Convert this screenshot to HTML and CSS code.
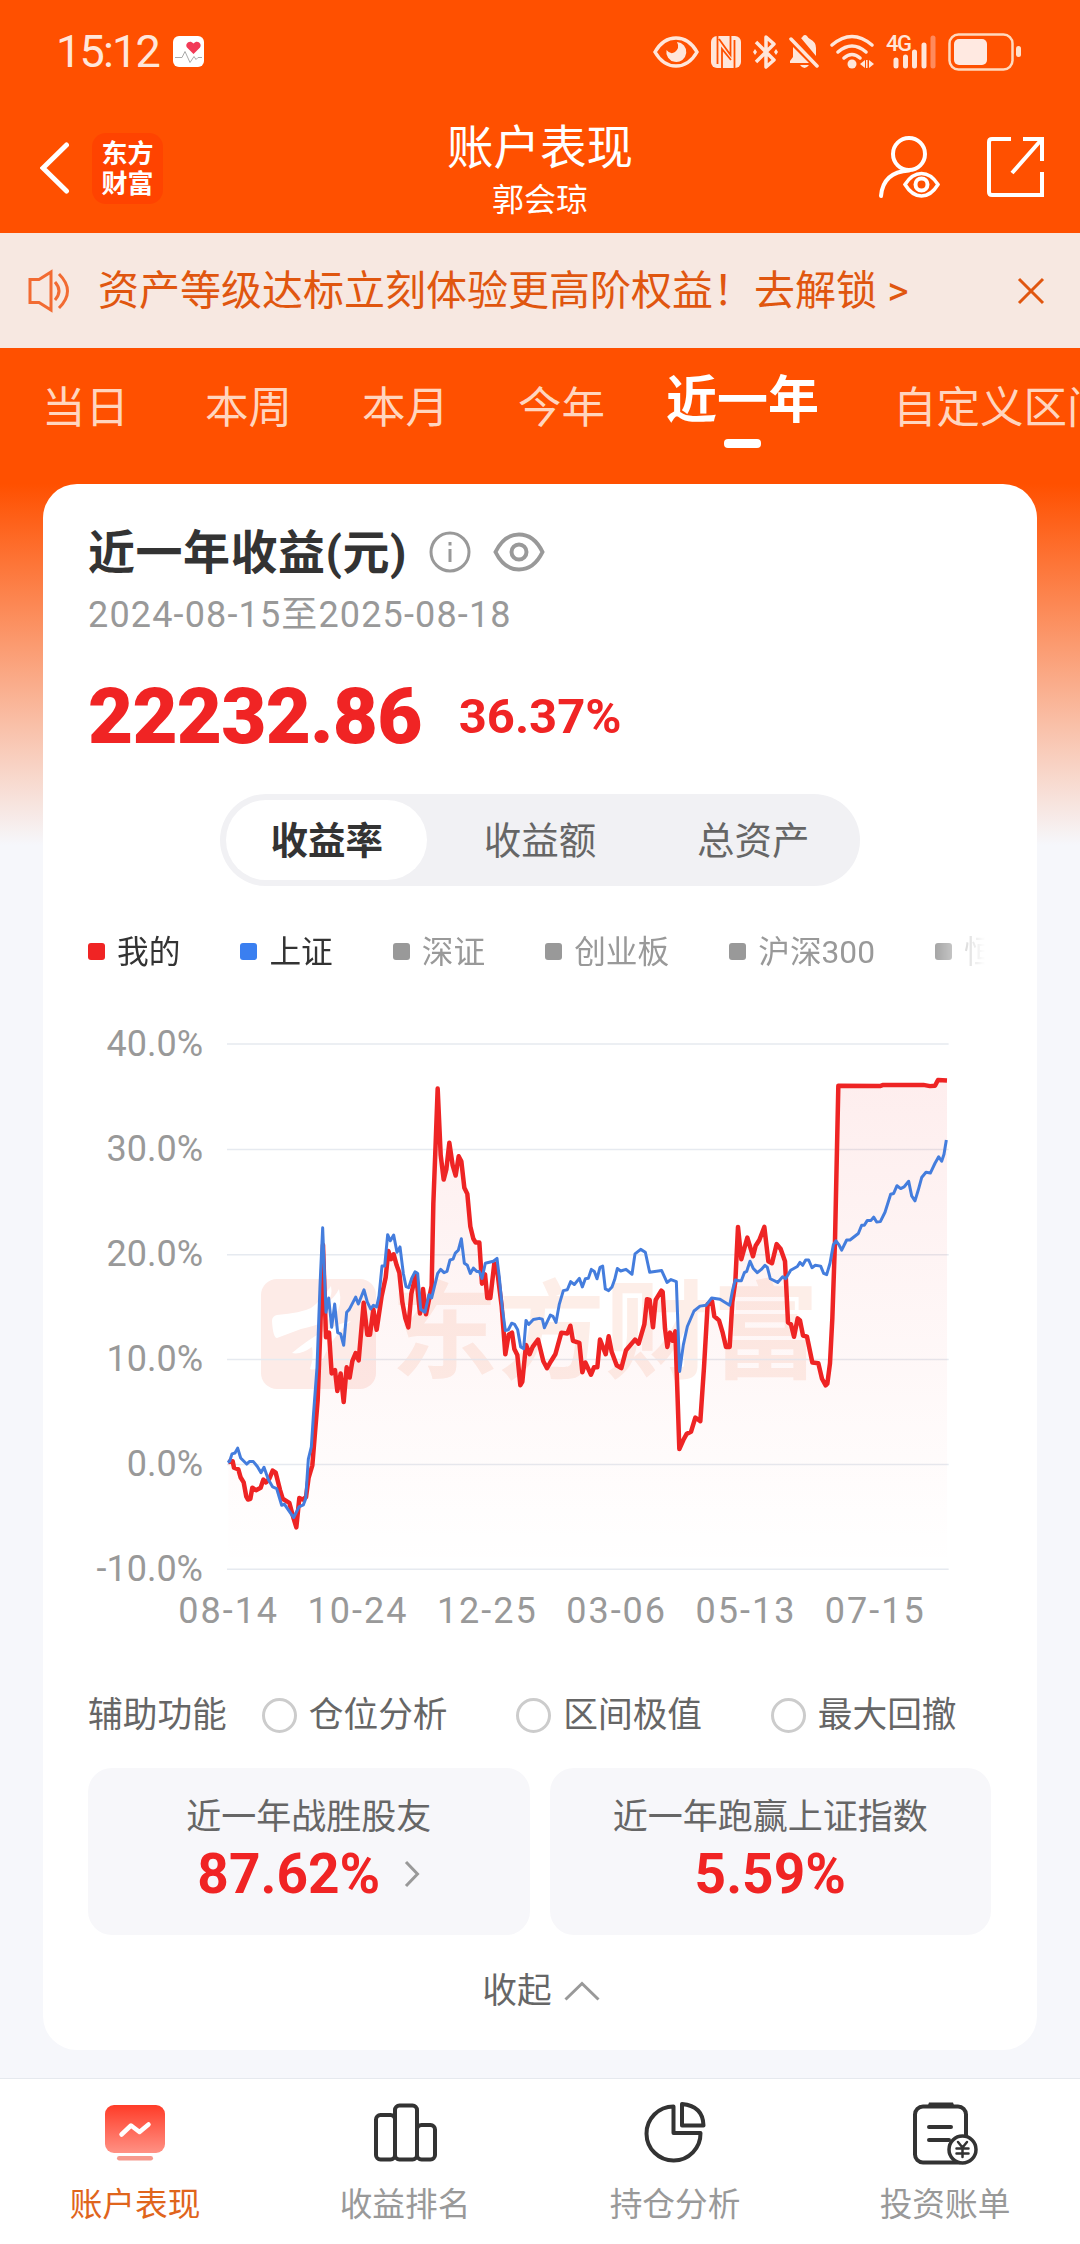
FILE: index.html
```html
<!DOCTYPE html>
<html lang="zh-CN">
<head>
    <meta charset="UTF-8">
    <meta name="viewport" content="width=device-width, initial-scale=1.0">
    <title>账户表现</title>
    <link rel="stylesheet" href="styles.css">
</head>
<body>
    <div class="status-bar">
        <span class="time">15:12</span>
        <svg class="health" width="31" height="31" viewBox="0 0 31 31">
            <rect width="31" height="31" rx="6" fill="#fff"/>
            <path d="M20.500 18 L14 11.500 C11.500 8 16.500 3 20.500 7.500 C24.500 3 29.500 8 27 11.500 Z" fill="#f23a57"/>
            <path d="M2 21.500 h7 l3 -6 5 11 4 -6 2 3 2 -2 h4" fill="none" stroke="#aaa" stroke-width="1"/>
        </svg>
        <div class="status-icons">
            <svg width="46" height="36" viewBox="0 0 46 36">
                <path d="M2 18 Q10 4 23 4 T44 18 Q36 32 23 32 T2 18 Z" fill="none" stroke="#ffe6da" stroke-width="3.500"/>
                <path d="M24 8 a10 10 0 1 1 -10.500 8 q4 5 8.500 2 q5 -4 2 -10 Z" fill="#ffe6da"/>
            </svg>
            <svg width="32" height="36" viewBox="0 0 32 36">
                <rect x="1" y="2" width="30" height="32" rx="6" fill="#ffe6da"/>
                <path d="M7.500 2 V30 M24.500 6 V34 M12 34 V15 L21 26 M20.500 2 V21 L9 5" fill="none" stroke="#ff5000" stroke-width="1.800"/>
            </svg>
            <svg width="25" height="36" viewBox="0 0 25 36">
                <path d="M3 8 L21 26 L13 33 V3 L21 10 L3 28" fill="none" stroke="#ffe6da" stroke-width="3.500" stroke-linejoin="round"/>
                <path d="M0 18 l2 -3 2 3 -2 3 Z M21 18 l2 -3 2 3 -2 3 Z" fill="#ffe6da"/>
            </svg>
            <svg width="30" height="36" viewBox="0 0 30 36">
                <path d="M4 13 L20 29 H1 V27 L4 23 Z M12 4 Q13 4 14 2 Q16 0 18 2 Q19 4 21 5 Q27 8 27 14 V22 Z M11 31 h9 q-4.500 6 -9 0 Z" fill="#ffe6da"/>
                <path d="M2 5 L28 32" stroke="#ffe6da" stroke-width="3.500" stroke-linecap="round"/>
            </svg>
            <svg width="45" height="36" viewBox="0 0 45 36">
                <path d="M2 11 Q22 -6 42 11 M8 18 Q22 6 36 18 M14 24 Q22 17 30 24" fill="none" stroke="#ffe6da" stroke-width="3.500" stroke-linecap="round"/>
                <circle cx="22" cy="30" r="4.500" fill="#ffe6da"/>
                <path d="M30 30 l5 -4 v8 Z M36 26 h1.500 v8 h-1.500 Z M39 26 l5 4 -5 4 Z" fill="#ffe6da"/>
            </svg>
            <svg width="51" height="36" viewBox="0 0 51 36">
                <path d="M10 26 V32 M19.500 23 V32 M28.500 18 V32 M38 11 V32" stroke="#ffe6da" stroke-width="5" stroke-linecap="round"/>
                <path d="M47 4 V32" stroke="#ff8a5c" stroke-width="5" stroke-linecap="round"/>
                <text x="0" y="17" class="net">4G</text>
            </svg>
            <svg width="73" height="38" viewBox="0 0 73 38">
                <rect x="1.500" y="1.500" width="63" height="35" rx="9" fill="none" stroke="#ffd9bd" stroke-width="2.500"/>
                <rect x="6" y="6" width="33" height="26" rx="5" fill="#ffe9e1"/>
                <rect x="68" y="13" width="5" height="11" rx="2.500" fill="#ffe1cc"/>
            </svg>
        </div>
    </div>

    <header class="header">
        <div class="header-left">
            <svg width="30" height="52" viewBox="0 0 30 52">
                <path d="M26.500 3 L3 26 L26.500 49" fill="none" stroke="#fff" stroke-width="5" stroke-linecap="round"/>
            </svg>
            <div class="brand">东方<br>财富</div>
        </div>
        <div class="header-title">
            <h1>账户表现</h1>
            <p>郭会琼</p>
        </div>
        <div class="header-right">
            <svg width="62" height="64" viewBox="0 0 62 64" fill="none" stroke="#fff" stroke-width="4">
                <circle cx="31" cy="19" r="16"/>
                <path d="M3 61 Q5 37 31 35.500" stroke-linecap="round"/>
                <path d="M27 49.500 Q34 38.500 43.500 38.500 T60 49.500 Q53 61 43.500 61 T27 49.500 Z" stroke-width="3.500"/>
                <circle cx="43.500" cy="49.500" r="6"/>
            </svg>
            <svg width="58" height="60" viewBox="0 0 58 60" fill="none" stroke="#fff" stroke-width="4">
                <path d="M24 2 H5 Q2 2 2 5 V55 Q2 58 5 58 H55 V35"/>
                <path d="M36 2 H55 V24 M55 2 L25 36"/>
            </svg>
        </div>
    </header>

    <div class="notice">
        <svg width="42" height="44" viewBox="0 0 42 44" fill="none" stroke="#f26b32" stroke-width="3">
            <path d="M2 10.500 H11 L23 3 V41 L11 33.500 H2 Z"/>
            <path d="M27 13 Q35 22 27 31 M31 5 Q48 22 31 39"/>
        </svg>
        <p>资产等级达标立刻体验更高阶权益！去解锁 &gt;</p>
        <svg width="28" height="28" viewBox="0 0 28 28">
            <path d="M2 2 L26 26 M26 2 L2 26" stroke="#e0560f" stroke-width="3"/>
        </svg>
    </div>

    <nav class="tabs">
        <a>当日</a>
        <a>本周</a>
        <a>本月</a>
        <a>今年</a>
        <a class="active">近一年</a>
        <a>自定义区间</a>
    </nav>

    <main class="card">
        <div class="title-row">
            <h2>近一年收益(元)</h2>
            <svg width="42" height="42" viewBox="0 0 42 42" fill="none" stroke="#999" stroke-width="3">
                <circle cx="21" cy="21" r="19"/>
                <path d="M21 18 V31 M21 11 V14.500"/>
            </svg>
            <svg width="52" height="40" viewBox="0 0 52 40" fill="none" stroke="#999" stroke-width="4">
                <path d="M2.500 20 Q11 2.500 26 2.500 T49.500 20 Q41 37.500 26 37.500 T2.500 20 Z"/>
                <circle cx="26" cy="20" r="7.500"/>
            </svg>
        </div>
        <p class="period">2024-08-15至2025-08-18</p>
        <div class="amount">
            <strong>22232.86</strong>
            <span>36.37%</span>
        </div>

        <div class="segment">
            <span class="on">收益率</span>
            <span>收益额</span>
            <span>总资产</span>
        </div>

        <div class="legend">
            <span class="mine">我的</span>
            <span class="sh">上证</span>
            <span>深证</span>
            <span>创业板</span>
            <span>沪深300</span>
            <span>恒生</span>
        </div>

        <div class="chart">
            <div class="y-axis">
                <span>40.0%</span>
                <span>30.0%</span>
                <span>20.0%</span>
                <span>10.0%</span>
                <span>0.0%</span>
                <span>-10.0%</span>
            </div>
            <div class="plot">
                <div class="watermark">
                    <svg width="115" height="110" viewBox="0 0 115 110">
                        <rect width="115" height="110" rx="16" fill="#fdebe7"/>
                        <path d="M11 42 Q11 37 16 36 Q40 34 50 29 Q60 22 70 7 Q72 17 66 24 Q74 18 78 10 Q82 26 74 36 Q66 44 40 50 L16 59 Q12 59 11 42 Z M31 74 Q62 48 90 42 Q68 60 60 86 Q55 92 49 90 Q53 78 51 68 Q40 76 31 74 Z" fill="#fff"/>
                    </svg>
                    <span>东方财富</span>
                </div>
                <svg class="lines" viewBox="441 63.700 2169 1374.500" preserveAspectRatio="none">
                    <defs>
                        <linearGradient id="area" x1="0" y1="0" x2="0" y2="1">
                            <stop offset="0" stop-color="#f02828" stop-opacity="0.080"/>
                            <stop offset="1" stop-color="#f02828" stop-opacity="0"/>
                        </linearGradient>
                    </defs>
                    <path class="grid" d="M441 108 H2606 M441 366 H2606 M441 624 H2606 M441 881 H2606 M441 1138 H2606 M441 1395 H2606"/>
                    <path fill="url(#area)" d="M445 1132 458 1130 475 1150 504 1224 517 1195 542 1195 578 1153 608 1222 628 1232 649 1292 658 1220 678 1218 697 1140 713 980 729 600 738 826 747 815 755 915 765 907 772 958 782 915 791 985 800 900 809 925 827 865 836 883 851 742 862 820 870 820 880 758 890 808 905 725 917 680 925 615 941 623 958 668 967 740 985 802 994 720 1008 670 1020 768 1029 708 1038 770 1055 700 1060 500 1073 217 1082 380 1091 440 1108 350 1127 430 1136 383 1144 395 1153 460 1162 475 1171 555 1187 594 1198 594 1206 695 1215 672 1222 730 1231 730 1243 645 1252 665 1265 750 1276 868 1286 820 1296 815 1303 855 1312 870 1321 944 1338 845 1349 868 1374 832 1401 902 1426 868 1444 815 1462 817 1471 798 1479 835 1498 840 1507 912 1516 888 1533 918 1552 900 1560 832 1577 868 1586 824 1595 862 1624 902 1638 858 1676 842 1693 795 1701 733 1709 735 1719 802 1727 735 1748 715 1762 850 1770 815 1778 835 1786 812 1798 1100 1820 1063 1833 1058 1846 1023 1861 1032 1883 745 1896 738 1903 775 1917 785 1938 850 1949 850 1957 740 1966 690 1974 556 1984 635 2002 582 2019 628 2027 602 2053 556 2065 640 2076 645 2090 598 2115 640 2124 790 2133 795 2142 825 2153 780 2169 822 2181 825 2197 888 2215 890 2237 944 2250 890 2257 780 2265 590 2275 210 2565 210 2574 196 2601 197 V1395 H445 Z"/>
                    <path class="line-mine" d="M445 1132 458 1130 462 1146 475 1150 482 1170 491 1182 499 1217 504 1224 511 1222 517 1195 528 1201 542 1195 550 1175 558 1182 568 1173 578 1153 587 1158 600 1200 608 1222 628 1232 640 1268 649 1292 658 1220 668 1224 678 1218 686 1170 697 1140 705 1060 713 980 720 830 729 600 738 826 747 815 755 915 765 907 772 958 782 915 791 985 800 900 809 925 817 885 827 865 836 883 851 742 862 820 870 820 880 758 890 808 905 725 917 680 925 615 933 635 941 623 950 650 958 668 967 740 976 780 985 802 994 720 1008 670 1020 768 1029 708 1038 770 1048 730 1055 700 1060 500 1067 350 1073 217 1082 380 1091 440 1099 415 1108 350 1118 405 1127 430 1136 383 1144 395 1153 460 1162 475 1171 555 1180 585 1187 594 1198 594 1206 695 1215 672 1222 730 1231 730 1243 645 1252 665 1265 750 1276 868 1286 820 1296 815 1303 855 1312 870 1321 944 1327 935 1338 845 1349 868 1358 850 1374 832 1390 885 1401 902 1413 885 1426 868 1444 815 1462 817 1471 798 1479 835 1498 840 1507 912 1516 888 1533 918 1542 900 1552 900 1560 832 1577 868 1586 824 1595 862 1610 895 1624 902 1638 858 1665 832 1676 842 1693 795 1701 733 1709 735 1719 802 1727 735 1744 712 1748 715 1755 805 1762 850 1770 815 1778 835 1786 812 1798 1100 1810 1078 1820 1063 1833 1058 1846 1023 1861 1032 1872 900 1883 745 1896 738 1903 775 1917 785 1928 815 1938 850 1949 850 1957 740 1966 690 1974 556 1984 635 2002 582 2019 628 2027 602 2038 588 2053 556 2065 640 2076 645 2090 598 2102 610 2115 640 2124 790 2133 795 2142 825 2153 780 2160 785 2169 822 2181 825 2197 888 2215 890 2226 928 2237 944 2242 940 2250 890 2257 780 2265 590 2275 210 2400 211 2410 208 2530 208 2550 211 2565 210 2574 196 2601 197"/>
                    <path class="line-sh" d="M443 1133 449 1130 456 1112 465 1110 473 1098 482 1122 500 1137 508 1131 520 1131 532 1143 543 1158 552 1145 565 1175 578 1193 590 1197 605 1238 613 1235 628 1253 641 1268 657 1242 670 1237 677 1222 685 1125 694 1095 700 1020 711 900 720 700 728 558 738 765 746 730 755 802 764 745 773 815 782 818 791 846 800 765 808 758 827 728 835 745 852 710 862 740 872 757 880 748 890 752 897 725 906 652 914 652 923 575 931 590 941 576 951 618 960 605 970 670 978 702 986 705 995 682 1005 666 1013 670 1022 758 1035 765 1047 722 1055 730 1073 670 1082 660 1092 668 1101 665 1110 637 1119 635 1126 620 1135 613 1144 585 1153 645 1162 650 1171 670 1180 657 1190 665 1198 665 1206 682 1216 645 1240 640 1251 633 1258 680 1267 755 1276 810 1285 808 1295 792 1304 795 1313 808 1322 850 1331 854 1338 785 1346 795 1360 783 1378 780 1387 782 1393 803 1411 772 1419 775 1428 790 1438 745 1450 712 1462 710 1472 690 1483 697 1498 682 1507 703 1516 683 1525 682 1534 660 1543 665 1551 683 1560 655 1568 652 1576 708 1586 712 1596 703 1604 685 1612 658 1622 664 1638 660 1656 672 1665 622 1682 611 1696 618 1709 667 1745 663 1761 692 1773 685 1789 690 1794 800 1799 910 1810 845 1822 800 1842 762 1860 750 1878 748 1895 730 1920 733 1949 748 1958 710 1966 686 1976 688 1984 688 1993 668 2000 665 2010 640 2020 658 2032 668 2044 660 2055 650 2062 655 2071 683 2093 692 2108 678 2117 683 2132 662 2152 653 2160 643 2168 650 2177 637 2186 637 2196 656 2206 650 2222 652 2231 670 2240 673 2250 645 2260 600 2268 590 2277 600 2285 613 2300 588 2310 588 2335 572 2345 552 2353 552 2362 540 2373 540 2381 532 2390 544 2401 543 2415 520 2432 476 2441 474 2451 455 2462 462 2472 458 2486 444 2495 480 2505 492 2515 465 2525 435 2538 422 2551 424 2565 400 2576 384 2585 395 2592 378 2599 343"/>
                </svg>
            </div>
            <div class="x-axis">
                <span>08-14</span>
                <span>10-24</span>
                <span>12-25</span>
                <span>03-06</span>
                <span>05-13</span>
                <span>07-15</span>
            </div>
        </div>

        <div class="tools">
            <span class="label">辅助功能</span>
            <label><i></i>仓位分析</label>
            <label><i></i>区间极值</label>
            <label><i></i>最大回撤</label>
        </div>

        <div class="stats">
            <div class="stat">
                <p>近一年战胜股友</p>
                <div class="value">
                    87.62%
                    <svg width="16" height="28" viewBox="0 0 16 28"><path d="M2 2 L13.500 14 L2 26" fill="none" stroke="#999" stroke-width="3"/></svg>
                </div>
            </div>
            <div class="stat">
                <p>近一年跑赢上证指数</p>
                <div class="value">5.59%</div>
            </div>
        </div>

        <div class="collapse">
            收起
            <svg width="36" height="20" viewBox="0 0 36 20"><path d="M1.500 18.500 L18 2.500 L34.500 18.500" fill="none" stroke="#999" stroke-width="3"/></svg>
        </div>
    </main>

    <footer class="bottom-nav">
        <a class="current">
            <svg width="66" height="64" viewBox="0 0 66 64">
                <defs>
                    <linearGradient id="screen" x1="0" y1="0" x2="0" y2="1">
                        <stop offset="0" stop-color="#ff3c28"/>
                        <stop offset="1" stop-color="#ff9184"/>
                    </linearGradient>
                </defs>
                <rect x="3" y="4" width="60" height="48" rx="9" fill="url(#screen)"/>
                <path d="M19.500 33.500 L29 24.500 L37.500 31 L46.500 23.500" fill="none" stroke="#fff" stroke-width="4.500" stroke-linecap="round" stroke-linejoin="round"/>
                <rect x="15" y="55" width="36" height="4.500" rx="2.200" fill="#f69a8e"/>
            </svg>
            账户表现
        </a>
        <a>
            <svg width="66" height="64" viewBox="0 0 66 64" fill="none" stroke="#333" stroke-width="4">
                <rect x="4" y="14" width="19" height="44.500" rx="4.500"/>
                <rect x="23" y="4.500" width="22" height="54" rx="4.500"/>
                <rect x="45" y="24" width="18" height="34.500" rx="4.500"/>
            </svg>
            收益排名
        </a>
        <a>
            <svg width="66" height="64" viewBox="0 0 66 64" fill="none" stroke="#333" stroke-width="4" stroke-linejoin="round">
                <path d="M31.500 5.500 V32 H58.500 A27 27 0 1 1 31.500 5.500 Z"/>
                <path d="M40 3 V24.500 H61.500 Q61 5 40 3 Z"/>
            </svg>
            持仓分析
        </a>
        <a>
            <svg width="66" height="64" viewBox="0 0 66 64" fill="none" stroke="#333" stroke-width="4" stroke-linecap="round">
                <rect x="3" y="5.500" width="51" height="56" rx="8"/>
                <path d="M17 1.500 H41 L43 7 H15 Z" fill="#333" stroke="none"/>
                <path d="M17 26 H39 M17 39 H37"/>
                <circle cx="50.500" cy="48.500" r="13.500" fill="#fff" stroke-width="3.500"/>
                <path d="M46 41 L50.500 46.500 L55 41 M50.500 46.500 V56 M44.500 47.500 H56.500 M44.500 52.500 H56.500" stroke-width="2.500"/>
            </svg>
            投资账单
        </a>
    </footer>
</body>
</html>
```
FILE: styles.css
```css
* {
    box-sizing: border-box;
}

body {
    margin: 0;
    width: 1080px;
    height: 2244px;
    overflow: hidden;
    font-family: Roboto, "Noto Sans CJK SC", sans-serif;
    color: #333;
    background: linear-gradient(#ff5000 484px, #f6f7fb 845px);
}

h1, h2, p {
    margin: 0;
    font-weight: normal;
}

svg {
    display: block;
    flex-shrink: 0;
}

.status-bar {
    display: flex;
    align-items: center;
    height: 103px;
    padding: 0 59px 0 56px;
    color: #ffe6da;
}

.time {
    width: 117px;
    font-size: 45px;
    letter-spacing: -1.800px;
}

.status-icons {
    display: flex;
    align-items: center;
    gap: 11px;
    margin-left: auto;
}

.net {
    font-size: 22px;
    font-weight: 500;
    fill: #ffe6da;
    letter-spacing: -1.500px;
}

/* header */
.header {
    display: grid;
    grid-template-columns: 1fr auto 1fr;
    height: 130px;
    color: #fff;
}

.header-left {
    display: flex;
    align-items: center;
    gap: 22px;
    padding-left: 40px;
}

.brand {
    width: 71px;
    height: 71px;
    padding-top: 6px;
    border-radius: 14px;
    background: #ff4300;
    font-size: 26px;
    font-weight: bold;
    line-height: 30px;
    text-align: center;
}

.header-title {
    padding-top: 15px;
    text-align: center;
}

.header-title h1 {
    font-size: 46.500px;
    line-height: 60px;
}

.header-title p {
    font-size: 32px;
    line-height: 44px;
}

.header-right {
    display: flex;
    align-items: center;
    justify-content: flex-end;
    gap: 47px;
    padding: 0 35px 2px 0;
}

.notice {
    display: flex;
    align-items: center;
    height: 115px;
    padding: 0 35px 0 28px;
    background: #f7e8e1;
    color: #e0560f;
}

.notice p {
    flex: 1;
    margin-left: 28px;
    font-size: 41px;
    line-height: 60px;
}

.tabs {
    display: flex;
    height: 136px;
    padding: 33px 0 0 42px;
    overflow: hidden;
    white-space: nowrap;
    font-size: 43.500px;
    line-height: 56px;
    color: #ffd5bf;
}

.tabs a {
    margin-right: 70px;
}

.tabs a:first-child {
    margin-right: 76px;
}

.tabs a:nth-child(3) {
    margin-right: 69px;
}

.tabs a:nth-child(4) {
    margin-right: 61px;
}

.tabs .active {
    margin: -8px 74px 0 0;
    font-size: 51px;
    font-weight: bold;
    color: #fff;
}

.tabs .active::after {
    content: "";
    display: block;
    width: 37px;
    height: 9px;
    margin: 10px auto 0;
    border-radius: 4px;
    background: #fff;
}

/* main card */
.card {
    height: 1566px;
    margin: 0 43px;
    padding: 44px 45px 0;
    border-radius: 34px;
    background: #fff;
}

.title-row {
    display: flex;
    align-items: center;
    gap: 22px;
    height: 48px;
}

.title-row h2 {
    padding-top: 1px;
    font-size: 47px;
    font-weight: bold;
    line-height: 48px;
    letter-spacing: 0.500px;
    white-space: nowrap;
}

.period {
    margin-top: 19px;
    font-size: 36px;
    line-height: 40px;
    letter-spacing: 1.150px;
    color: #999;
}

.amount {
    display: flex;
    align-items: center;
    gap: 37px;
    height: 80px;
    margin-top: 41px;
    color: #f02424;
    font-weight: bold;
}

.amount strong {
    font-size: 78px;
    letter-spacing: -0.800px;
}

.amount span {
    font-size: 49px;
}

.segment {
    display: flex;
    width: 640px;
    height: 92px;
    margin: 38px auto 0;
    border-radius: 46px;
    background: #f1f1f4;
    font-size: 37.500px;
    line-height: 82px;
    text-align: center;
    color: #666;
}

.segment span {
    flex: 1;
    height: 80px;
    margin: 6px;
    border-radius: 40px;
}

.segment .on {
    background: #fff;
    color: #333;
    font-weight: bold;
}

.legend {
    display: flex;
    gap: 60px;
    height: 42px;
    margin-top: 46px;
    margin-right: 7px;
    overflow: hidden;
    white-space: nowrap;
    font-size: 31.700px;
    line-height: 42px;
    color: #999;
    -webkit-mask-image: linear-gradient(to right, #000 840px, transparent 100%);
    mask-image: linear-gradient(to right, #000 840px, transparent 100%);
}

.legend span::before {
    content: "";
    display: inline-block;
    width: 17px;
    height: 17px;
    margin-right: 12px;
    border-radius: 3px;
    background: #999;
    vertical-align: 3px;
}

.legend .mine, .legend .sh {
    color: #333;
}

.legend .mine::before {
    background: #f02424;
}

.legend .sh::before {
    background: #3a7ff0;
}

/* chart */
.chart {
    display: grid;
    grid-template: 561px 1fr / 115px 723px;
    column-gap: 24px;
    height: 620px;
    margin-top: 46px;
    padding-top: 6px;
    font-size: 36px;
    color: #999;
}

.y-axis {
    display: flex;
    flex-direction: column;
    justify-content: space-between;
    line-height: 36px;
    text-align: right;
}

.plot {
    position: relative;
}

.lines {
    position: relative;
    width: 100%;
    height: 100%;
}

.lines path {
    vector-effect: non-scaling-stroke;
}

.grid {
    stroke: #e6eaf0;
    stroke-width: 1.500px;
}

.line-mine, .line-sh {
    fill: none;
    stroke-linejoin: round;
}

.line-mine {
    stroke: #ee2424;
    stroke-width: 4.500px;
}

.line-sh {
    stroke: #447ddd;
    stroke-width: 3px;
}

.watermark {
    position: absolute;
    top: 253px;
    left: 34px;
    display: flex;
    align-items: center;
    gap: 15px;
    font-size: 107px;
    font-weight: bold;
    line-height: 110px;
    white-space: nowrap;
    color: #fdeee8;
}

.x-axis {
    grid-column: 1 / -1;
    display: flex;
    width: 776px;
    margin: 4px 0 0 76px;
    line-height: 40px;
    letter-spacing: 2px;
}

.x-axis span {
    flex: 1;
    text-align: center;
}

.tools {
    display: flex;
    align-items: center;
    height: 40px;
    margin-top: 55px;
    font-size: 34.700px;
    line-height: 40px;
    white-space: nowrap;
    color: #666;
}

.tools .label {
    flex-shrink: 0;
    margin-right: 35px;
}

.tools label {
    display: flex;
    flex-shrink: 0;
    align-items: center;
    gap: 12px;
    width: 254.500px;
}

.tools label:last-child {
    width: auto;
}

.tools i {
    width: 35px;
    height: 35px;
    border: 3px solid #ccc;
    border-radius: 50%;
}

.stats {
    display: grid;
    grid-template-columns: 1fr 1fr;
    gap: 20px;
    margin: 33px 1px 0 0;
}

.stat {
    height: 167px;
    padding-top: 27px;
    border-radius: 24px;
    background: #f7f7fa;
    text-align: center;
}

.stat p {
    font-size: 35px;
    line-height: 46px;
    color: #666;
}

.value {
    display: flex;
    align-items: center;
    justify-content: center;
    gap: 24px;
    margin-top: 3px;
    font-size: 55px;
    font-weight: bold;
    line-height: 60px;
    color: #f02424;
}

.collapse {
    display: flex;
    align-items: center;
    justify-content: center;
    gap: 12px;
    margin: 36px 0 0 2px;
    font-size: 34.700px;
    line-height: 40px;
    color: #666;
}

.bottom-nav {
    display: flex;
    height: 166px;
    margin-top: 28px;
    border-top: 1px solid #e6e9ee;
    background: #fff;
}

.bottom-nav a {
    flex: 1;
    display: flex;
    flex-direction: column;
    align-items: center;
    gap: 19px;
    padding-top: 22px;
    font-size: 32.700px;
    line-height: 42px;
    color: #999;
}

.bottom-nav .current {
    color: #e0651c;
}
```
